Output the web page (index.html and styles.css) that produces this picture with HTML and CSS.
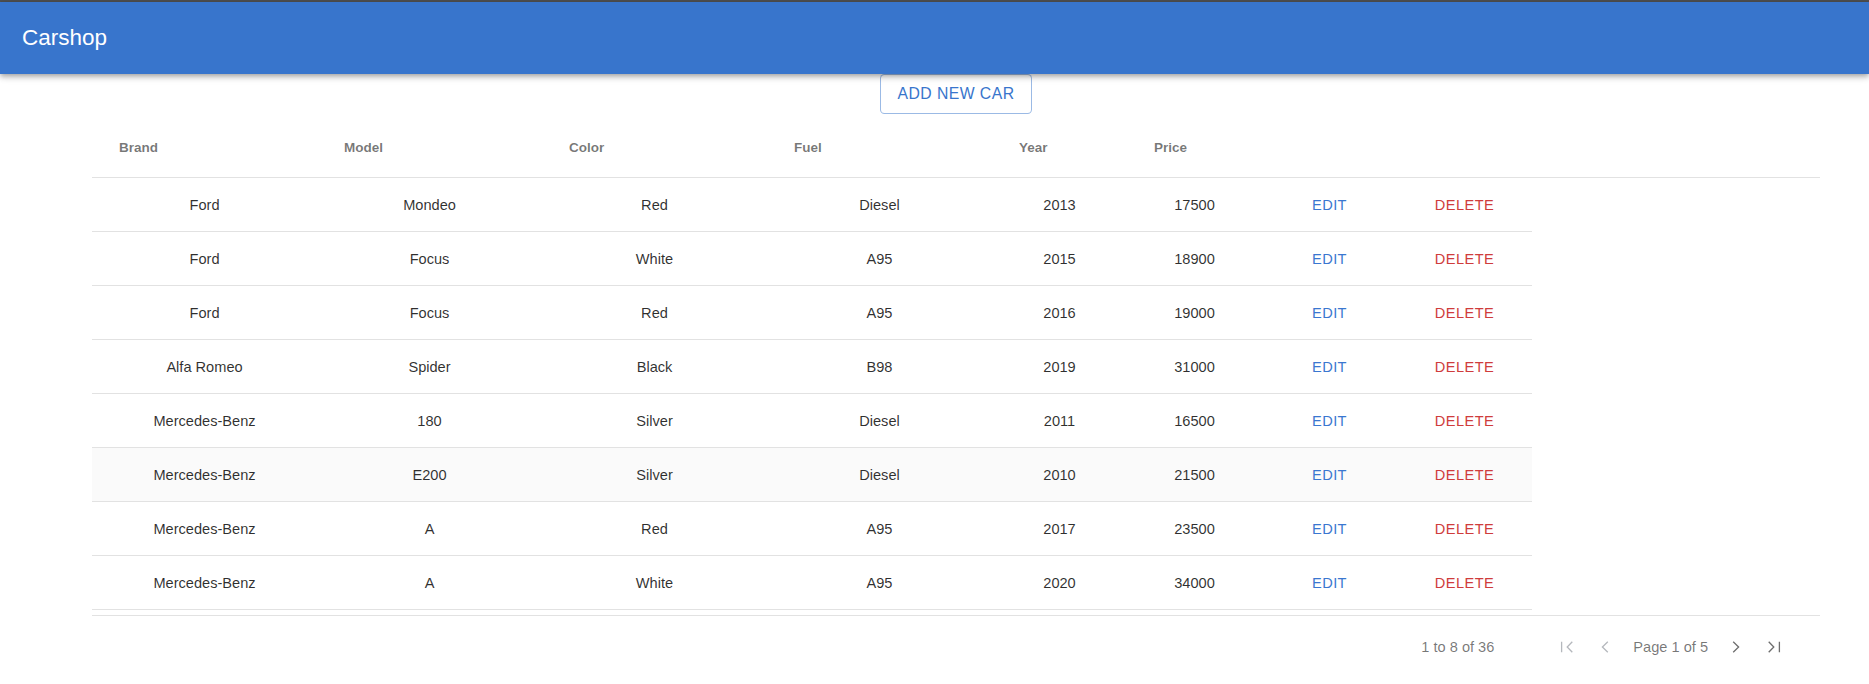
FILE: index.html
```html
<!DOCTYPE html>
<html lang="en">
<head>
<meta charset="utf-8">
<title>Carshop</title>
<link rel="stylesheet" href="styles.css">
</head>
<body>
<div class="top-strip"></div>
<header class="appbar">
  <h1 class="app-title">Carshop</h1>
</header>
<main class="content">
  <div class="actions">
    <button class="btn-outlined">ADD NEW CAR</button>
  </div>
  <section class="grid">
    <div class="grid-header">
      <div class="hcell">Brand</div>
      <div class="hcell">Model</div>
      <div class="hcell">Color</div>
      <div class="hcell">Fuel</div>
      <div class="hcell">Year</div>
      <div class="hcell">Price</div>
      <div class="hcell"></div>
      <div class="hcell"></div>
    </div>
    <div class="grid-body">
      <div class="row">
        <div class="cell">Ford</div><div class="cell">Mondeo</div><div class="cell">Red</div><div class="cell">Diesel</div><div class="cell">2013</div><div class="cell">17500</div>
        <div class="cell"><span class="btn-text edit">EDIT</span></div><div class="cell"><span class="btn-text delete">DELETE</span></div>
      </div>
      <div class="row">
        <div class="cell">Ford</div><div class="cell">Focus</div><div class="cell">White</div><div class="cell">A95</div><div class="cell">2015</div><div class="cell">18900</div>
        <div class="cell"><span class="btn-text edit">EDIT</span></div><div class="cell"><span class="btn-text delete">DELETE</span></div>
      </div>
      <div class="row">
        <div class="cell">Ford</div><div class="cell">Focus</div><div class="cell">Red</div><div class="cell">A95</div><div class="cell">2016</div><div class="cell">19000</div>
        <div class="cell"><span class="btn-text edit">EDIT</span></div><div class="cell"><span class="btn-text delete">DELETE</span></div>
      </div>
      <div class="row">
        <div class="cell">Alfa Romeo</div><div class="cell">Spider</div><div class="cell">Black</div><div class="cell">B98</div><div class="cell">2019</div><div class="cell">31000</div>
        <div class="cell"><span class="btn-text edit">EDIT</span></div><div class="cell"><span class="btn-text delete">DELETE</span></div>
      </div>
      <div class="row">
        <div class="cell">Mercedes-Benz</div><div class="cell">180</div><div class="cell">Silver</div><div class="cell">Diesel</div><div class="cell">2011</div><div class="cell">16500</div>
        <div class="cell"><span class="btn-text edit">EDIT</span></div><div class="cell"><span class="btn-text delete">DELETE</span></div>
      </div>
      <div class="row row-hover">
        <div class="cell">Mercedes-Benz</div><div class="cell">E200</div><div class="cell">Silver</div><div class="cell">Diesel</div><div class="cell">2010</div><div class="cell">21500</div>
        <div class="cell"><span class="btn-text edit">EDIT</span></div><div class="cell"><span class="btn-text delete">DELETE</span></div>
      </div>
      <div class="row">
        <div class="cell">Mercedes-Benz</div><div class="cell">A</div><div class="cell">Red</div><div class="cell">A95</div><div class="cell">2017</div><div class="cell">23500</div>
        <div class="cell"><span class="btn-text edit">EDIT</span></div><div class="cell"><span class="btn-text delete">DELETE</span></div>
      </div>
      <div class="row">
        <div class="cell">Mercedes-Benz</div><div class="cell">A</div><div class="cell">White</div><div class="cell">A95</div><div class="cell">2020</div><div class="cell">34000</div>
        <div class="cell"><span class="btn-text edit">EDIT</span></div><div class="cell"><span class="btn-text delete">DELETE</span></div>
      </div>
    </div>
    <div class="pager">
      <span class="pager-summary">1 to 8 of 36</span>
      <div class="pager-pages">
        <span class="pg-icon disabled">
          <svg width="20" height="20" viewBox="0 0 20 20"><path d="M4.6 4.7V15.3M15.3 4.7L10.2 10l5.1 5.3" fill="none" stroke="currentColor" stroke-width="1.3"/></svg>
        </span>
        <span class="pg-icon disabled">
          <svg width="20" height="20" viewBox="0 0 20 20"><path d="M12.8 4.7L7.4 10l5.4 5.3" fill="none" stroke="currentColor" stroke-width="1.3"/></svg>
        </span>
        <span class="pg-text">Page 1 of 5</span>
        <span class="pg-icon">
          <svg width="20" height="20" viewBox="0 0 20 20"><path d="M7.2 4.7L12.6 10l-5.4 5.3" fill="none" stroke="currentColor" stroke-width="1.3"/></svg>
        </span>
        <span class="pg-icon">
          <svg width="20" height="20" viewBox="0 0 20 20"><path d="M4.7 4.7L9.8 10l-5.1 5.3M15.4 4.7V15.3" fill="none" stroke="currentColor" stroke-width="1.3"/></svg>
        </span>
      </div>
    </div>
  </section>
</main>
</body>
</html>
```

FILE: styles.css
```css
* {
  box-sizing: border-box;
}

html, body {
  margin: 0;
  padding: 0;
  background: #ffffff;
  font-family: "Liberation Sans", Arial, sans-serif;
}

.top-strip {
  height: 2px;
  background: #4e4f50;
}

.appbar {
  position: relative;
  z-index: 2;
  height: 72px;
  background: #3875cc;
  display: flex;
  align-items: center;
  padding-left: 22px;
  box-shadow: 0 2px 4px -1px rgba(0,0,0,0.2), 0 4px 5px 0 rgba(0,0,0,0.14), 0 1px 10px 0 rgba(0,0,0,0.12);
}

.app-title {
  margin: 0;
  color: #ffffff;
  font-size: 22.5px;
  font-weight: 400;
  line-height: 1;
}

.content {
  margin-left: 92px;
  width: 1728px;
}

.actions {
  display: flex;
  justify-content: center;
}

.btn-outlined {
  height: 40px;
  padding: 0 17px;
  border: 1px solid rgba(56,117,204,0.5);
  border-radius: 4.5px;
  background: #ffffff;
  color: #3875cc;
  font-family: "Liberation Sans", Arial, sans-serif;
  font-size: 15.75px;
  letter-spacing: 0.45px;
  font-weight: 400;
}

.grid {
  display: flex;
  flex-direction: column;
}

.grid-header {
  display: grid;
  grid-template-columns: repeat(4, 225px) repeat(4, 135px);
  height: 64px;
  border-bottom: 1px solid #e2e2e2;
}

.hcell {
  display: flex;
  align-items: center;
  padding-left: 27px;
  padding-top: 3px;
  font-size: 13.5px;
  font-weight: 700;
  color: rgba(0,0,0,0.54);
}

.grid-body {
  height: 437px;
}

.row {
  display: grid;
  grid-template-columns: repeat(4, 225px) repeat(4, 135px);
  width: 1440px;
  height: 54px;
  border-bottom: 1px solid #e2e2e2;
}

.row-hover {
  background: #fafafa;
}

.cell {
  display: flex;
  align-items: center;
  justify-content: center;
  font-size: 14.6px;
  color: rgba(0,0,0,0.82);
}

.btn-text {
  font-size: 14.6px;
  letter-spacing: 0.42px;
}

.edit {
  color: #3a77d0;
}

.delete {
  color: #cf3c3c;
}

.pager {
  height: 63px;
  border-top: 1px solid #e2e2e2;
  display: flex;
  align-items: center;
  justify-content: flex-end;
  padding-right: 36px;
  font-size: 14.6px;
  color: rgba(0,0,0,0.54);
}

.pager-summary {
  margin-right: 63px;
}

.pager-pages {
  display: flex;
  align-items: center;
  gap: 18px;
}

.pg-icon {
  display: flex;
  width: 20px;
  height: 20px;
  color: #6e6e6e;
}

.pg-icon.disabled {
  color: #b5b8bd;
}

.pg-text {
  color: rgba(0,0,0,0.54);
}
```
